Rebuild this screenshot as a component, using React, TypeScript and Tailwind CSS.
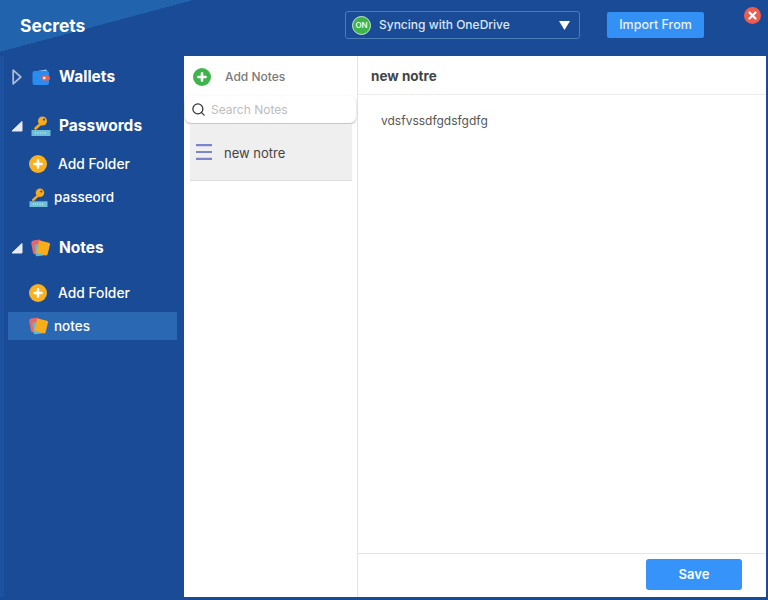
import { Search } from "lucide-react";

const font = { fontFamily: "Inter, 'Noto Sans', sans-serif" };

const PlusCircle = ({ bg }: { bg: string }) => (
  <svg width="18" height="18" viewBox="0 0 18 18" className="shrink-0">
    <circle cx="9" cy="9" r="9" fill={bg} />
    <path d="M9 5.4v7.2M5.4 9h7.2" stroke="#fff" strokeWidth="2.6" strokeLinecap="round" />
  </svg>
);

const WalletIcon = () => (
  <svg width="18" height="16" viewBox="0 0 18 16" className="shrink-0">
    <path d="M2 2.5 14.5 0.5 15.5 3z" fill="#8cc8f5" />
    <rect x="0.5" y="2" width="16.5" height="14" rx="2" fill="#2b8cf0" />
    <rect x="9.5" y="6.5" width="8.5" height="5" rx="2.5" fill="#ea5f52" />
    <circle cx="12.2" cy="9" r="1.3" fill="#fff" />
  </svg>
);

const KeyIcon = ({ size = 20 }: { size?: number }) => (
  <svg width={size} height={size} viewBox="0 0 20 20" className="shrink-0">
    <path d="M4.5 12.5 10 7.5" stroke="#f6ab1c" strokeWidth="2.6" strokeLinecap="round" />
    <circle cx="11.5" cy="5" r="4.5" fill="#f6ab1c" />
    <circle cx="13" cy="3.6" r="1.1" fill="#1a4b97" />
    <rect x="0.5" y="14" width="19" height="6" fill="#6cbfd6" />
    <path d="M4 17h12" stroke="#e3f3f7" strokeWidth="1.2" strokeDasharray="1 1.4" />
  </svg>
);

const NotesIcon = () => (
  <svg width="20" height="20" viewBox="0 0 20 20" className="shrink-0">
    <rect x="1" y="2" width="10" height="14" rx="2.5" fill="#e8686a" transform="rotate(-10 6 9)" />
    <rect x="4" y="6" width="9" height="12" rx="1.5" fill="#5cb9d6" transform="rotate(-8 8 12)" />
    <rect x="6.5" y="3.5" width="11.5" height="13" rx="1.5" fill="#f9ad1b" transform="rotate(14 12 10)" />
  </svg>
);

const TriangleOpen = () => (
  <svg width="12" height="12" viewBox="0 0 12 12" className="shrink-0">
    <path d="M11 1.5v9.5H1z" fill="#e6ebf2" stroke="#e6ebf2" strokeWidth="1" strokeLinejoin="round" />
  </svg>
);

const TriangleClosed = () => (
  <svg width="10" height="16" viewBox="0 0 10 16" className="shrink-0">
    <path d="M1.2 1.2 8.8 8 1.2 14.8z" fill="none" stroke="#a9bbd6" strokeWidth="1.8" strokeLinejoin="round" />
  </svg>
);

const MenuLines = () => (
  <svg width="16" height="16" viewBox="0 0 16 16" className="shrink-0">
    <path d="M0 1.2h16M0 8h16M0 14.8h16" stroke="#7d86cc" strokeWidth="2.2" />
  </svg>
);

export default function App() {
  return (
    <div
      style={font}
      className="flex h-[600px] w-[768px] flex-col overflow-hidden bg-[#1a4b97] bg-[linear-gradient(165deg,#2163ac_50px,#1a4b97_50px)] bg-[length:768px_56px] bg-no-repeat antialiased"
    >
      {/* top bar */}
      <header className="flex h-14 shrink-0 items-start">
        <h1 className="ml-5 mt-[14px] w-[325px] text-[17.5px] leading-6 font-bold text-white">Secrets</h1>
        <div className="mt-[11px] flex h-[28px] w-[235px] items-center rounded-[3px] border border-[#4a7db8] pl-[6px] pr-[9px]">
          <span className="flex h-[19px] w-[19px] shrink-0 items-center justify-center rounded-full border border-[#c6eac6] bg-[#3db54a] text-[8px] font-medium text-white">
            ON
          </span>
          <span className="ml-[8px] flex-1 text-[12px] font-medium text-[#dce7f5]">Syncing with OneDrive</span>
          <svg width="11" height="9" viewBox="0 0 11 9">
            <path d="M0 0h11L5.5 9z" fill="#fff" />
          </svg>
        </div>
        <button className="ml-[27px] mt-3 h-[26px] w-[97px] rounded-[2px] bg-[#3390f5] text-[12.5px] font-medium text-[#e8f2fe]">
          Import From
        </button>
        <div className="ml-[40px] mt-[7px]">
          <svg width="17" height="17" viewBox="0 0 17 17">
            <circle cx="8.5" cy="8.5" r="8.5" fill="#ee5b50" />
            <path d="M5.5 5.5l6 6M11.5 5.5l-6 6" stroke="#fff" strokeWidth="2.2" strokeLinecap="round" />
          </svg>
        </div>
      </header>

      <div className="flex min-h-0 flex-1 pb-[3px] pr-[2px]">
        {/* sidebar */}
        <aside className="flex w-[184px] shrink-0 flex-col border-l-4 border-[#1c52a0] pt-[7px] text-white">
          <div className="flex h-7 items-center pl-2">
            <TriangleClosed />
            <span className="ml-[10px]"><WalletIcon /></span>
            <span className="ml-[9px] text-[15.5px] font-bold">Wallets</span>
          </div>
          <div className="mt-[21px] flex h-7 items-center pl-[7px]">
            <TriangleOpen />
            <span className="ml-[8px]"><KeyIcon /></span>
            <span className="ml-[8px] text-[15.5px] font-bold">Passwords</span>
          </div>
          <div className="mt-[10px] flex h-7 items-center pl-[25px]">
            <PlusCircle bg="#fbb01f" />
            <span className="ml-[11px] text-[13.8px] font-medium">Add Folder</span>
          </div>
          <div className="mt-[5px] flex h-7 items-center pl-[25px]">
            <KeyIcon size={19} />
            <span className="ml-[6px] text-[13.5px] font-medium">passeord</span>
          </div>
          <div className="mt-[23px] flex h-7 items-center pl-[7px]">
            <TriangleOpen />
            <span className="ml-[8px]"><NotesIcon /></span>
            <span className="ml-[8px] text-[15.5px] font-bold">Notes</span>
          </div>
          <div className="mt-[17px] flex h-7 items-center pl-[25px]">
            <PlusCircle bg="#fbb01f" />
            <span className="ml-[11px] text-[13.8px] font-medium">Add Folder</span>
          </div>
          <div className="ml-1 mt-[5px] flex h-7 w-[169px] items-center bg-[#2a68b4] pl-[21px]">
            <NotesIcon />
            <span className="ml-[5px] text-[13.5px] font-medium">notes</span>
          </div>
        </aside>

        {/* main panel */}
        <main className="flex min-w-0 flex-1 bg-white">
          <section className="flex w-[174px] shrink-0 flex-col border-r border-[#e4e4e4]">
            <div className="flex h-10 items-center pl-[9px] pt-px">
              <PlusCircle bg="#3db54a" />
              <span className="ml-[14px] text-xs font-medium text-[#7a7a7a]">Add Notes</span>
            </div>
            <div className="mx-px flex h-[27px] items-center rounded-md bg-white pl-[6px] shadow-[0_1px_2px_rgba(0,0,0,0.3)]">
              <Search size={15} strokeWidth={2} className="text-[#333]" />
              <span className="ml-[5px] text-xs text-[#bcbcbc]">Search Notes</span>
            </div>
            <div className="mx-[6px] mt-px flex h-[57px] w-[162px] items-center border-b border-[#dcdcdc] bg-[#f0efef] pl-[6px]">
              <MenuLines />
              <span className="ml-[12px] pt-1 text-[13px] text-[#444]">new notre</span>
            </div>
          </section>

          <section className="flex min-w-0 flex-1 flex-col">
            <div className="flex h-[39px] shrink-0 items-center border-b border-[#ececec] pl-[13px] pt-[2px] text-[13.5px] font-bold text-[#444]">
              new notre
            </div>
            <div className="flex-1 pl-[23px] pt-[18px] text-xs leading-4 text-[#555]">vdsfvssdfgdsfgdfg</div>
            <div className="flex h-[44px] shrink-0 justify-end border-t border-[#e6e6e6] pr-[24px] pt-[5px]">
              <button className="h-[31px] w-[96px] rounded-[3px] bg-[#3693f9] text-[13px] font-semibold text-white">
                Save
              </button>
            </div>
          </section>
        </main>
      </div>
    </div>
  );
}
